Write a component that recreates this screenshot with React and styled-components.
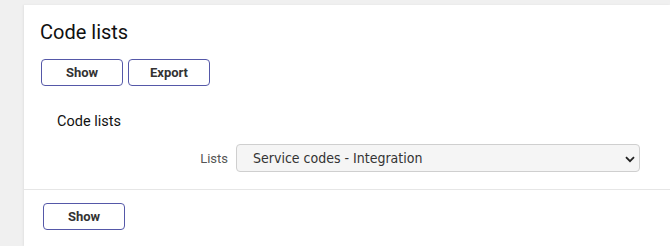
import styled, { createGlobalStyle } from 'styled-components';

const GlobalStyle = createGlobalStyle`
  body {
    margin: 0;
    background: #f0f0f0;
    font-family: Roboto, "Liberation Sans", sans-serif;
  }
`;

const Page = styled.div`
  padding: 5px 0 0 24px;
  height: 241px;
`;

const Panel = styled.div`
  background: #fff;
  height: 100%;
  box-shadow: -1px 0 2px rgba(0, 0, 0, 0.06);
`;

const Top = styled.div`
  padding: 15px 16px 0 16px;
  border-bottom: 1px solid #e6e6e6;
  height: 185px;
  box-sizing: border-box;
`;

const Title = styled.h1`
  margin: 0;
  font-size: 20px;
  font-weight: 400;
  color: #111;
  line-height: 24px;
`;

const ButtonRow = styled.div`
  display: flex;
  gap: 5px;
  margin-top: 15px;
  padding-left: 1px;
`;

const Button = styled.button`
  width: 82px;
  height: 27px;
  background: #fff;
  border: 1px solid #5558a8;
  border-radius: 4px;
  font-family: Roboto, "Liberation Sans", sans-serif;
  font-size: 13px;
  font-weight: 700;
  color: #333;
  padding: 0;
`;

const Section = styled.div`
  padding: 0 0 0 17px;
  margin-top: 26px;
`;

const SubTitle = styled.h2`
  margin: 0;
  font-size: 14.5px;
  font-weight: 400;
  color: #111;
  line-height: 20px;
`;

const Field = styled.div`
  display: flex;
  align-items: center;
  justify-content: flex-end;
  gap: 8px;
  margin-top: 12px;
  padding-right: 14px;
`;

const Label = styled.label`
  font-size: 13px;
  color: #555;
`;

const SelectBox = styled.div`
  position: relative;
  width: 404px;
  height: 28px;
`;

const Select = styled.select`
  appearance: none;
  width: 100%;
  height: 100%;
  background: #f5f5f5;
  border: 1px solid #cfcfcf;
  border-radius: 4px;
  padding: 0 30px 0 16px;
  font-family: "DejaVu Sans Condensed", "DejaVu Sans", sans-serif;
  font-size: 14px;
  color: #333;
  outline: none;
`;

const Chevron = styled.svg`
  position: absolute;
  right: 5px;
  top: 12px;
  pointer-events: none;
`;

const Bottom = styled.div`
  padding: 13px 0 0 19px;
`;

export default function App() {
  return (
    <>
      <GlobalStyle />
      <Page>
        <Panel>
          <Top>
            <Title>Code lists</Title>
            <ButtonRow>
              <Button>Show</Button>
              <Button>Export</Button>
            </ButtonRow>
            <Section>
              <SubTitle>Code lists</SubTitle>
              <Field>
                <Label>Lists</Label>
                <SelectBox>
                  <Select defaultValue="integration">
                    <option value="integration">Service codes - Integration</option>
                  </Select>
                  <Chevron width="10" height="7" viewBox="0 0 10 7">
                    <path d="M1 1.2 L5 5.2 L9 1.2" fill="none" stroke="#222" strokeWidth="1.8" />
                  </Chevron>
                </SelectBox>
              </Field>
            </Section>
          </Top>
          <Bottom>
            <Button>Show</Button>
          </Bottom>
        </Panel>
      </Page>
    </>
  );
}
